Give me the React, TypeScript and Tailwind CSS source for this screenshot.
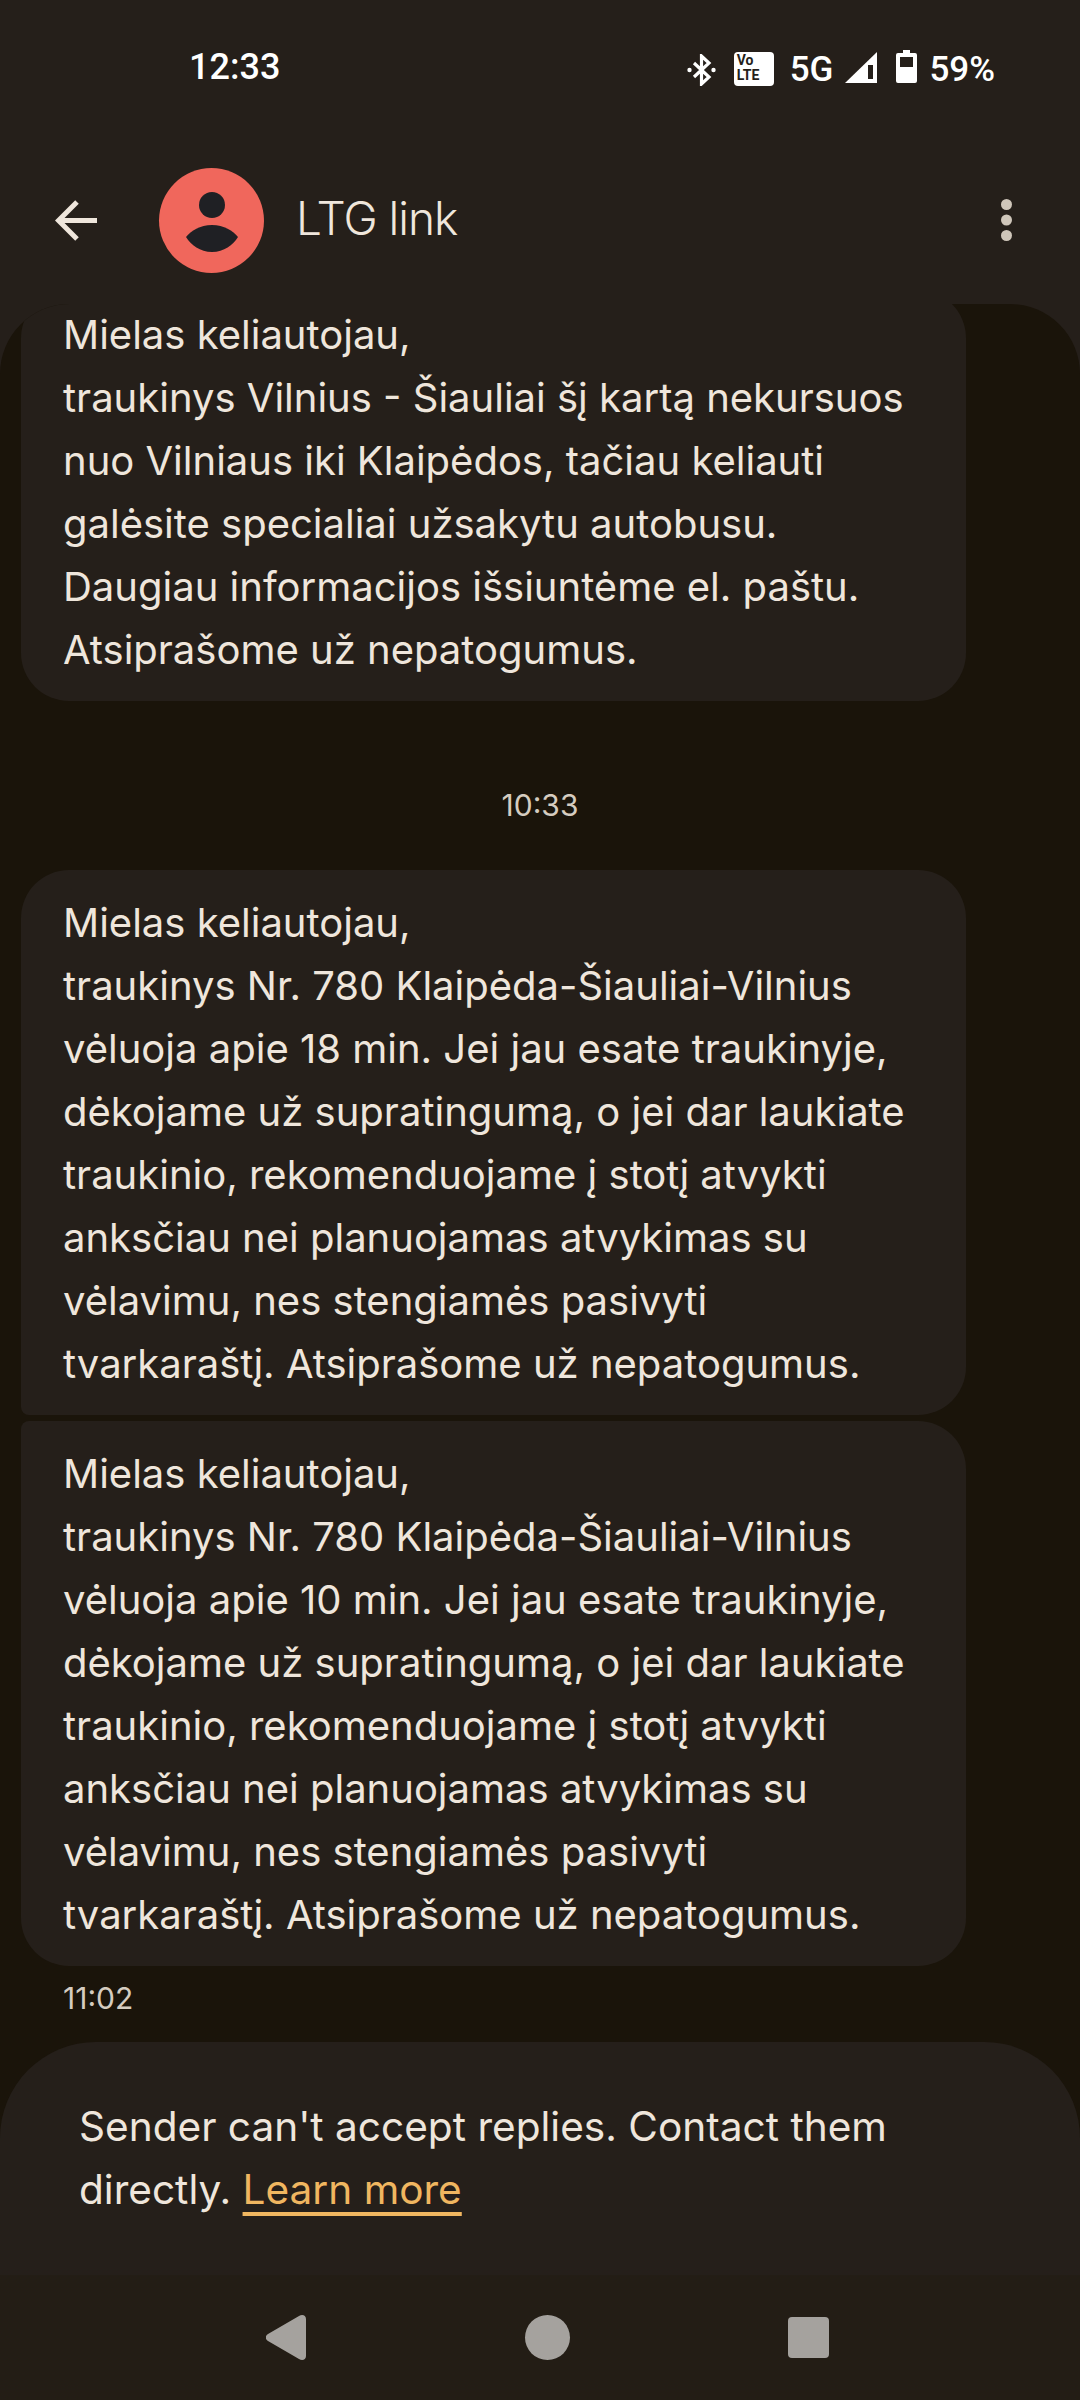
const Line = ({ children }: { children: React.ReactNode }) => (
  <div className="whitespace-nowrap">{children}</div>
);

function DelayBubble({ minutes, className }: { minutes: number; className: string }) {
  return (
    <div className={`w-[945px] bg-[#251f1a] pb-[20px] pl-[42px] pt-[21px] ${className}`}>
      <Line>Mielas keliautojau,</Line>
      <Line>traukinys Nr. 780 Klaipėda-Šiauliai-Vilnius</Line>
      <Line>vėluoja apie {minutes} min. Jei jau esate traukinyje,</Line>
      <Line>dėkojame už supratingumą, o jei dar laukiate</Line>
      <Line>traukinio, rekomenduojame į stotį atvykti</Line>
      <Line>anksčiau nei planuojamas atvykimas su</Line>
      <Line>vėlavimu, nes stengiamės pasivyti</Line>
      <Line>tvarkaraštį. Atsiprašome už nepatogumus.</Line>
    </div>
  );
}

export default function App() {
  return (
    <div className="flex h-[2400px] w-[1080px] flex-col overflow-hidden bg-[#251f1a] font-['Inter',sans-serif] text-[#efe6dc]">
      {/* status bar */}
      <div className="flex h-[134px] items-start justify-between pl-[189px] pr-[85px] pt-[46px] font-['Roboto',sans-serif] text-[36px] font-medium leading-[42px] text-white">
        <span>12:33</span>
        <div className="flex items-center text-[35px]">
          <svg className="mt-[3px]" width="29" height="32" viewBox="0 0 29 32" fill="none" stroke="white" strokeWidth="3.2">
            <path d="M7 9 22 23 14.500 30V2L22 9 7 23" />
            <circle cx="2.500" cy="16" r="2.200" fill="white" stroke="none" />
            <circle cx="26.500" cy="16" r="2.200" fill="white" stroke="none" />
          </svg>
          <span className="ml-[18px] flex h-[34px] w-[40px] flex-col rounded-[4px] bg-white pl-[3px] pt-[1px] text-[14px] font-bold leading-[15px] text-[#251f1a]">
            <span>Vo</span>
            <span>LTE</span>
          </span>
          <span className="ml-[16px] mt-[3px]">5G</span>
          <svg className="-mt-[2px] ml-[12px]" width="32" height="31" viewBox="0 0 32 31">
            <path d="M32 0V31H0Z" fill="white" />
            <path d="M23 13h5v14h-5z" fill="#251f1a" />
          </svg>
          <svg className="-mt-[4px] ml-[19px]" width="21" height="33" viewBox="0 0 21 33">
            <path d="M7 0h7v3h5a2 2 0 0 1 2 2v26a2 2 0 0 1-2 2H2a2 2 0 0 1-2-2V5a2 2 0 0 1 2-2h5z" fill="white" />
            <path d="M4 7h13v10H4z" fill="#251f1a" />
          </svg>
          <span className="ml-[12px] mt-[3px]">59%</span>
        </div>
      </div>

      {/* app bar */}
      <div className="flex h-[170px] items-start pl-[55px] pr-[68px] pt-[34px]">
        <svg className="mt-[32px]" width="42" height="41" viewBox="0 0 42 41" fill="none" stroke="#efe6dc" strokeWidth="5">
          <path d="M42 20.500H4M22 2 3.500 20.500 22 39" />
        </svg>
        <div className="ml-[62px] flex h-[105px] w-[105px] items-center justify-center rounded-full bg-[#f0675c]">
          <svg width="105" height="105" viewBox="0 0 105 105" fill="#1f2024">
            <circle cx="53" cy="37" r="13" />
            <path d="M53 57c12 0 21 6 26 12-5 8-14 15-26 15s-21-7-26-15c5-6 14-12 26-12Z" />
          </svg>
        </div>
        <span className="ml-[32px] mt-[22px] text-[46px] font-light leading-[56px] tracking-[-1px]">LTG link</span>
        <svg className="ml-auto mt-[31px]" width="11" height="42" viewBox="0 0 11 42" fill="#cfc6ba">
          <circle cx="5.500" cy="5.500" r="5.500" />
          <circle cx="5.500" cy="21" r="5.500" />
          <circle cx="5.500" cy="36.500" r="5.500" />
        </svg>
      </div>

      <div className="h-[1971px] overflow-hidden rounded-t-[70px] bg-[#1a140a]">
        {/* messages */}
        <div className="h-[1738px] overflow-hidden pl-[21px] text-[40px] leading-[63px]">
          <div className="-mt-[14px] w-[945px] rounded-[48px] bg-[#251f1a] pb-[20px] pl-[42px] pt-[13px]">
            <Line>Mielas keliautojau,</Line>
            <Line>traukinys Vilnius - Šiauliai šį kartą nekursuos</Line>
            <Line>nuo Vilniaus iki Klaipėdos, tačiau keliauti</Line>
            <Line>galėsite specialiai užsakytu autobusu.</Line>
            <Line>Daugiau informacijos išsiuntėme el. paštu.</Line>
            <Line>Atsiprašome už nepatogumus.</Line>
          </div>
          <div className="w-[1038px] pb-[45px] pt-[84px] text-center text-[30px] leading-[40px] text-[#d5ccc0]">10:33</div>
          <DelayBubble minutes={18} className="rounded-t-[48px] rounded-bl-[8px] rounded-br-[48px]" />
          <DelayBubble minutes={10} className="mt-[6px] rounded-b-[48px] rounded-tl-[8px] rounded-tr-[48px]" />
          <div className="ml-[42px] mt-[12px] text-[30px] leading-[40px] text-[#d5ccc0]">11:02</div>
        </div>

        {/* composer notice */}
        <div className="h-[233px] rounded-t-[96px] bg-[#251f1a] pl-[79px] pt-[53px] text-[40.6px] leading-[63px]">
          <Line>Sender can't accept replies. Contact them</Line>
          <Line>
            directly.{' '}
            <span className="text-[#f0b660] underline decoration-[4px] underline-offset-[8px]">Learn more</span>
          </Line>
        </div>
      </div>

      {/* nav bar */}
      <div className="flex flex-1 items-start bg-[#231d15] pl-[266px] pt-[40px]">
        <svg width="40" height="45" viewBox="0 0 40 45" fill="#a5a29e">
          <path d="M2 19 33 1c3-2 7-1 7 3v37c0 4-4 5-7 3L2 26c-3-2-3-5 0-7Z" />
        </svg>
        <div className="ml-[219px] h-[45px] w-[45px] rounded-full bg-[#a5a29e]" />
        <div className="ml-[218px] mt-[2px] h-[41px] w-[41px] rounded-[4px] bg-[#a5a29e]" />
      </div>
    </div>
  );
}
